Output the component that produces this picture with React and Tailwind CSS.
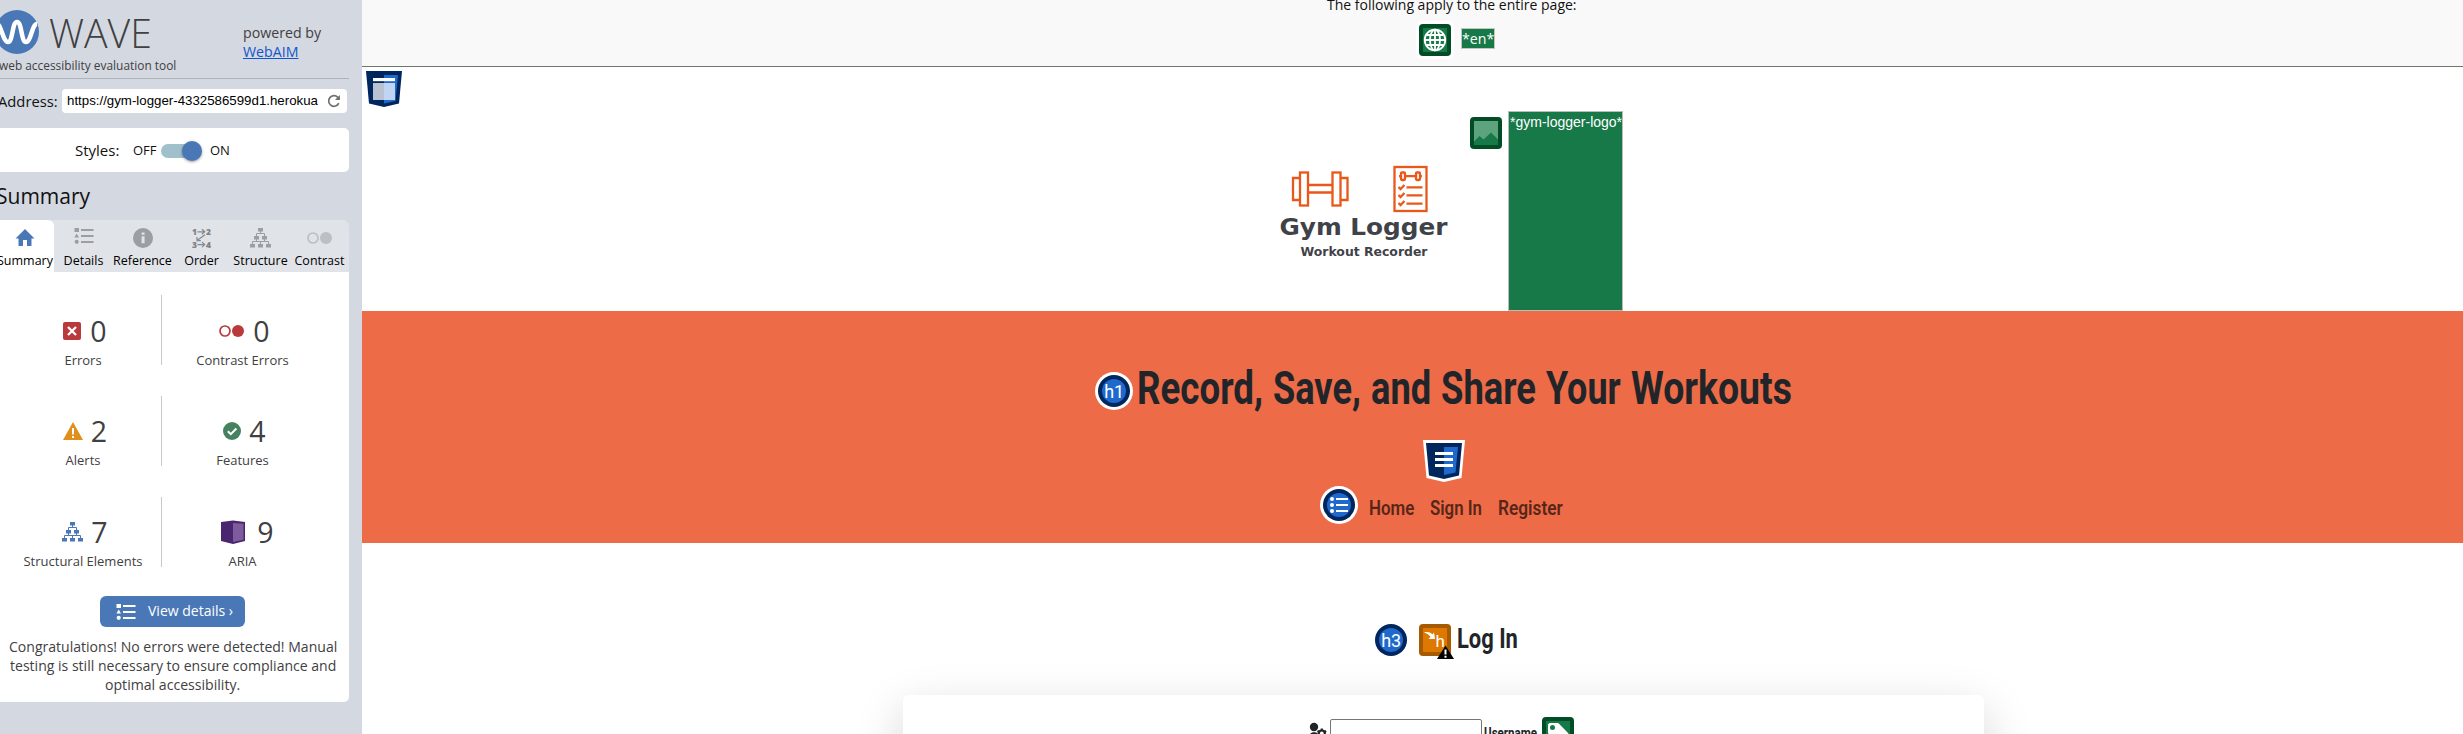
import { useLayoutEffect, useRef, useState } from "react";

// Condensed display text: squeezes a regular face horizontally to a given width.
function Condensed({ width, children, className = "" }) {
  const ref = useRef(null);
  const [scale, setScale] = useState(1);
  useLayoutEffect(() => {
    setScale(width / ref.current.offsetWidth);
  }, [width]);
  return (
    <span className={`block shrink-0 ${className}`} style={{ width }}>
      <span
        ref={ref}
        className="inline-block origin-left whitespace-nowrap"
        style={{ transform: `scaleX(${scale})` }}
      >
        {children}
      </span>
    </span>
  );
}

function ListIcon({ className }) {
  return (
    <svg width="20" height="18" viewBox="0 0 20 18" fill="currentColor" className={className}>
      <rect x="0.5" y="1" width="4.5" height="4" />
      <path d="M2.7 6.6 5 10.6H.4z" />
      <circle cx="2.7" cy="14.8" r="2.1" />
      <rect x="7" y="2" width="12.5" height="2" />
      <rect x="7" y="8" width="12.5" height="2" />
      <rect x="7" y="14" width="12.5" height="2" />
    </svg>
  );
}

function TreeIcon({ className }) {
  return (
    <svg width="21" height="20" viewBox="0 0 21 20" fill="currentColor" className={className}>
      <path d="M8 0h5v3.500H8zM4 8h5v3.500H4zM12 8h5v3.500h-5zM0 16h5v3.500H0zM8 16h5v3.500H8zM16 16h5v3.500h-5z" />
      <path d="M10.500 3v2.500M6.500 9V5.500h8V9M6.500 11v2.500M14.500 11v2.500M2.500 17v-3.500h16V17M10.500 13.500V17" fill="none" stroke="currentColor" strokeWidth="1" />
    </svg>
  );
}

function HomeIcon() {
  return (
    <svg width="20" height="18" viewBox="0 0 20 18" fill="#4a78b6">
      <path d="M10 0 19.500 9.500H16.500V17H12V11H8V17H3.500V9.500H.5z" />
    </svg>
  );
}

function InfoIcon() {
  return (
    <svg width="20" height="20" viewBox="0 0 20 20">
      <circle cx="10" cy="10" r="10" fill="#9b9ea2" />
      <path d="M8.600 4.500h3v2.300h-3zM8.600 8.300h3v6.900h-3z" fill="#e0e3e8" />
    </svg>
  );
}

function OrderIcon() {
  return (
    <svg width="20" height="20" viewBox="0 0 20 20" fill="#7f8286">
      <g fontFamily="Open Sans, sans-serif" fontWeight="800" fontSize="8.500">
        <text x="0" y="6.500">1</text>
        <text x="14" y="6.500">2</text>
        <text x="0" y="19.500">3</text>
        <text x="14" y="19.500">4</text>
      </g>
      <path d="M5.500 3.800h7M10 1.300l2.700 2.500L10 6.300M5.500 16.600h7M10 14.100l2.700 2.500-2.700 2.500M13 6.800 5 12.500M5 9v3.600h3.800" fill="none" stroke="#85888c" strokeWidth="1.200" />
    </svg>
  );
}

function ContrastIcon({ className }) {
  return (
    <svg width="25" height="12" viewBox="0 0 25 12" className={className}>
      <circle cx="6" cy="6" r="5" fill="none" stroke="currentColor" strokeWidth="1.700" />
      <circle cx="19" cy="6" r="6" fill="currentColor" />
    </svg>
  );
}

function ErrorIcon() {
  return (
    <svg width="18" height="18" viewBox="0 0 18 18">
      <rect width="18" height="18" rx="2" fill="#b93a3c" />
      <path d="m5 5 8 8M13 5l-8 8" stroke="#fff" strokeWidth="2.300" />
    </svg>
  );
}

function AlertIcon() {
  return (
    <svg width="20" height="18" viewBox="0 0 20 18">
      <path d="M10 0 20 18H0z" fill="#e08f1b" />
      <path d="M9 6h2v6.500H9zM9 14h2v2H9z" fill="#fff" />
    </svg>
  );
}

function FeatureIcon() {
  return (
    <svg width="18" height="18" viewBox="0 0 18 18">
      <circle cx="9" cy="9" r="9" fill="#46825f" />
      <path d="m4.800 9.200 3 3 5.600-5.700" fill="none" stroke="#fff" strokeWidth="2" />
    </svg>
  );
}

function AriaIcon() {
  return (
    <svg width="24" height="24" viewBox="0 0 24 24">
      <path d="M0 2 12 .5 24 2v19L12 24 0 21z" fill="#4a2570" />
      <path d="M12 3 22.500 3.800V19.700L12 22z" fill="#7f5c9e" />
    </svg>
  );
}

const tabs = [
  { label: "Summary", icon: <HomeIcon />, active: true, box: "w-[58px] pr-0" },
  { label: "Details", icon: <ListIcon className="-mt-1 text-[#9b9ea2]" />, box: "w-[59px]" },
  { label: "Reference", icon: <InfoIcon />, box: "w-[59px]" },
  { label: "Order", icon: <OrderIcon />, box: "w-[59px]" },
  { label: "Structure", icon: <TreeIcon className="text-[#9b9ea2]" />, box: "w-[59px]" },
  { label: "Contrast", icon: <ContrastIcon className="text-[#bcbfc4]" />, box: "w-[59px]" },
];

function Stat({ icon, value, label, row, gap }) {
  return (
    <div className="flex flex-col items-center">
      <div className={`flex h-10 items-center ${row}`}>
        <div className="flex h-6 items-center">{icon}</div>
        <span className={`text-[28.500px] leading-10 ${gap}`}>{value}</span>
      </div>
      <div className="mt-[-1px] text-[13px] leading-5 whitespace-nowrap">{label}</div>
    </div>
  );
}

function StatRow({ left, right, pad }) {
  return (
    <div className="flex h-[101px] items-start">
      <div className={`w-[165px] pl-[9px] ${pad}`}>{left}</div>
      <div className="h-[70px] w-px bg-[#c8c8c8]" />
      <div className={`w-[161px] ${pad}`}>{right}</div>
    </div>
  );
}

function Sidebar() {
  return (
    <aside className="h-[734px] w-[362px] shrink-0 overflow-hidden bg-[#d4d8e0] text-[#3f4042]">
      <div className="-ml-1 w-[353px]">
        <header className="flex h-[79px] justify-between border-b border-[#b0b4b8]">
          <div className="flex flex-col pt-[10px]">
            <div className="flex h-[46px]">
              <svg width="44" height="44" viewBox="0 0 44 44" className="-ml-px">
                <circle cx="22" cy="22" r="22" fill="#4a78b6" />
                <path d="M2 14C6 14 8 32 13 32S17 12 22 12s4 20 9 20S37 14 42 14" fill="none" stroke="#fff" strokeWidth="4.500" />
              </svg>
              <span className="ml-[10px] text-[40px] font-light leading-[46px]">
                <Condensed width={103}>WAVE</Condensed>
              </span>
            </div>
            <div className="ml-[3px] text-[12.500px] leading-5 whitespace-nowrap">
              <Condensed width={177}>web accessibility evaluation tool</Condensed>
            </div>
          </div>
          <div className="mr-[28px] pt-[23px] text-[14.200px] leading-[19px]">
            <Condensed width={78}>powered by</Condensed>
            <div className="text-[#1155cc] underline">WebAIM</div>
          </div>
        </header>

        <div className="mt-[10px] flex h-6 items-center pr-0.5">
          <span className="w-[66px] pl-[2px] text-[15px] leading-6 text-[#111]">
            <Condensed width={60}>Address:</Condensed>
          </span>
          <div className="flex h-6 flex-1 items-center justify-between rounded-[4px] bg-white pr-[6px] pl-[5px]">
            <span className="font-['Liberation_Sans',sans-serif] text-[13.333px] leading-6 text-black">
              <Condensed width={251}>https://gym-logger-4332586599d1.herokua</Condensed>
            </span>
            <svg width="14" height="14" viewBox="0 0 14 14" fill="none" stroke="#6f6f6f" strokeWidth="1.700">
              <path d="M11.800 9.200A5.300 5.300 0 1 1 10.800 3.300L12.500 5" />
              <path d="M12.900 1v5H8z" fill="#6f6f6f" stroke="none" />
            </svg>
          </div>
        </div>

        <div className="mt-[15px] flex h-11 items-center rounded-[5px] bg-white pl-[79px] text-[#111]">
          <span className="w-[58px] text-[15px] leading-5">Styles:</span>
          <span className="w-[28px] text-[13px] leading-5">OFF</span>
          <div className="mt-0.5 flex h-[14px] w-10 items-center justify-end rounded-full bg-[#a0c1cc]">
            <div className="-mr-px size-5 shrink-0 rounded-full bg-[#4a78b6] shadow-[0_1px_3px_rgba(0,0,0,0.4)]" />
          </div>
          <span className="ml-[9px] text-[13px] leading-5">ON</span>
        </div>

        <h2 className="mt-[10px] text-[21px] leading-7 text-[#111]">Summary</h2>

        <nav className="mt-[10px] flex h-[52px] overflow-hidden rounded-t-[6px] bg-[#e0e3e8] text-black">
          {tabs.map((t) => (
            <div
              key={t.label}
              className={`flex shrink-0 flex-col items-center pt-[7px] ${t.box} ${t.active ? "rounded-tr-[6px] bg-white" : ""}`}
            >
              <div className="flex h-[22px] items-center">{t.icon}</div>
              <div className="mt-[2px] text-[12.500px] leading-5 whitespace-nowrap">{t.label}</div>
            </div>
          ))}
        </nav>

        <section className="h-[430px] rounded-b-[5px] bg-white pt-[23px]">
          <StatRow
            pad="pt-[16px]"
            left={<Stat icon={<ErrorIcon />} value="0" label="Errors" row="pl-[4px]" gap="ml-[9px]" />}
            right={<Stat icon={<ContrastIcon className="text-[#b93a3c]" />} value="0" label="Contrast Errors" row="pl-[4px]" gap="ml-[9px]" />}
          />
          <StatRow
            pad="pt-[15px]"
            left={<Stat icon={<AlertIcon />} value="2" label="Alerts" row="pl-[4px]" gap="ml-[8px]" />}
            right={<Stat icon={<FeatureIcon />} value="4" label="Features" row="pl-[4px]" gap="ml-[8px]" />}
          />
          <StatRow
            pad="pt-[15px]"
            left={<Stat icon={<TreeIcon className="text-[#4a78b6]" />} value="7" label="Structural Elements" row="pl-[4px]" gap="ml-[8px]" />}
            right={<Stat icon={<AriaIcon />} value="9" label="ARIA" row="pl-[10px]" gap="ml-[12px]" />}
          />
          <button className="mx-auto mt-[-2px] flex h-[31px] w-[145px] items-center rounded-[6px] bg-[#4a78b6] pl-[16px] text-white">
            <ListIcon />
            <span className="-mt-px ml-[12px] text-[14px] leading-5 whitespace-nowrap">View details ›</span>
          </button>
          <p className="mt-[10px] flex flex-col items-center text-[14px] leading-[19px]">
            <Condensed width={328}>Congratulations! No errors were detected! Manual</Condensed>
            <Condensed width={326}>testing is still necessary to ensure compliance and</Condensed>
            <Condensed width={135}>optimal accessibility.</Condensed>
          </p>
        </section>
      </div>
    </aside>
  );
}

function RoundBadge({ children, ring }) {
  return (
    <svg width="38" height="38" viewBox="0 0 38 38" className="shrink-0">
      {ring && <circle cx="19" cy="19" r="19" fill="#fff" />}
      <circle cx="19" cy="19" r="16" fill="#00265e" />
      <circle cx="19" cy="19" r="12" fill="#1f69cc" />
      {children}
    </svg>
  );
}

function HeadingLabel({ children }) {
  return (
    <text x="19.200" y="25.500" textAnchor="middle" fill="#fff" fontFamily="Roboto, sans-serif" fontSize="18">
      {children}
    </text>
  );
}

function GymLogo() {
  return (
    <svg width="180" height="100" viewBox="1275 160 180 100">
      <g fill="none" stroke="#e8581a" strokeWidth="2.300">
        <rect x="1300" y="172.500" width="8" height="33" />
        <rect x="1332.500" y="172.500" width="8" height="33" />
        <path d="M1300 178h-7v22h7M1340.500 178h7v22h-7M1308 185h24.500M1308 192.500h24.500" />
        <rect x="1394.500" y="167" width="32" height="44" />
        <rect x="1401" y="172.500" width="4" height="7.500" rx="1" />
        <rect x="1416" y="172.500" width="4" height="7.500" rx="1" />
        <path d="M1399 176.200h2M1405 176.200h11M1420 176.200h2M1406.500 187.300h16M1406.500 195.400h16M1406.500 203.600h16M1398.500 187l2 2 4-4M1398.500 195l2 2 4-4M1398.500 203l2 2 4-4" />
      </g>
      <g fill="#3f4248" fontFamily="DejaVu Sans, sans-serif" fontWeight="700">
        <text x="1279.500" y="235" fontSize="23" textLength="168" lengthAdjust="spacingAndGlyphs">Gym Logger</text>
        <text x="1300.500" y="256.300" fontSize="11.500" textLength="127" lengthAdjust="spacingAndGlyphs">Workout Recorder</text>
      </g>
    </svg>
  );
}

function PageBar() {
  return (
    <div className="h-[67px] border-b border-[#6f766b] bg-[#f9f9f9]">
      <div className="flex w-[2180px] flex-col items-center">
        <div className="-mt-[5px] text-[14px] leading-5 text-[#111]">
          <Condensed width={250}>The following apply to the entire page:</Condensed>
        </div>
        <div className="mt-[6px] mr-[-7px] flex h-[38px] items-start">
          <svg width="38" height="38" viewBox="0 0 38 38">
            <rect width="38" height="38" rx="6" fill="#fff" />
            <rect x="3" y="3" width="32" height="32" rx="4" fill="#024d25" />
            <rect x="7" y="7" width="24" height="24" fill="#177848" />
            <g fill="none" stroke="#fff" strokeWidth="1.800">
              <circle cx="19" cy="19" r="10.300" />
              <ellipse cx="19" cy="19" rx="5" ry="10.300" />
              <path d="M19 9v20M9 19h20M10.500 14h17M10.500 24h17" />
            </g>
          </svg>
          <span className="mt-[7px] ml-[7px] h-[21px] w-[34px] border border-[#c5c5c5] bg-[#177848] text-center text-[14.200px] leading-[19px] text-white">
            *en*
          </span>
        </div>
      </div>
    </div>
  );
}

function LogoArea() {
  return (
    <div className="flex h-[244px] items-start">
      <svg width="36" height="36" viewBox="0 0 36 36" className="mt-1 ml-1 shrink-0">
        <path d="M0 0H36L33 32.500 18 36 3 32.500z" fill="#00265e" />
        <path d="M18 4H32L29.500 30 18 32.500z" fill="#1f69cc" />
        <path d="M7 7H29v3.200H7z" fill="#fff" />
        <path d="M7 12H29V29H7z" fill="#fff" fillOpacity=".72" />
      </svg>
      <div className="mt-[93px] ml-[873px]">
        <GymLogo />
      </div>
      <svg width="32" height="32" viewBox="0 0 32 32" className="mt-[50px] ml-[15px] shrink-0">
        <rect width="32" height="32" rx="4" fill="#024d25" />
        <rect x="4" y="4" width="24" height="24" fill="#5da37e" />
        <path d="M4 24.500 9.500 19l4 3.500L21 15.500l7 7V28H4z" fill="#177848" />
      </svg>
      <div className="mt-[44px] ml-[6px] h-[200px] w-[115px] shrink-0 border border-[#bbb] bg-[#177848] pl-px font-['Liberation_Sans',sans-serif] text-[14px] leading-[20px] text-white">
        <Condensed width={112}>*gym-logger-logo*</Condensed>
      </div>
    </div>
  );
}

function Hero() {
  return (
    <div className="h-[232px] bg-[#ed6b47] font-[Roboto,sans-serif]">
      <div className="flex h-[129px] w-[2163px] items-start justify-center">
        <div className="mt-[61px]">
          <RoundBadge ring><HeadingLabel>h1</HeadingLabel></RoundBadge>
        </div>
        <h1 className="ml-1 flex gap-[10px] pt-[52px] text-[46px] font-bold leading-[50px] text-[#212529]">
          <Condensed width={126}>Record,</Condensed>
          <Condensed width={88}>Save,</Condensed>
          <Condensed width={60}>and</Condensed>
          <Condensed width={95}>Share</Condensed>
          <Condensed width={75}>Your</Condensed>
          <Condensed width={161}>Workouts</Condensed>
        </h1>
      </div>
      <div className="flex w-[2163px] justify-center">
        <svg width="42" height="42" viewBox="0 0 42 42">
          <path d="M0 0H42L38.500 38 21 42 3.500 38z" fill="#fff" />
          <path d="M3 3H39L36 35.500 21 39 6 35.500z" fill="#00265e" />
          <path d="M21 7H35L32.500 32.500 21 35z" fill="#1f69cc" />
          <path d="M12 12H30v3H12zM12 18H30v3H12zM12 24H30v3H12z" fill="#fff" />
        </svg>
      </div>
      <div className="mt-1 flex pl-[958px]">
        <RoundBadge ring>
          <g fill="#fff">
            <circle cx="12" cy="13" r="2" />
            <circle cx="12" cy="19" r="2" />
            <circle cx="12" cy="25" r="2" />
            <path d="M16 12h12v2H16zM16 18h12v2H16zM16 24h12v2H16z" />
          </g>
        </RoundBadge>
        <nav className="ml-[11px] flex gap-[16px] pt-[10px] text-[21px] font-semibold leading-[24px] text-[#582618]">
          <Condensed width={45}>Home</Condensed>
          <Condensed width={52}>Sign In</Condensed>
          <Condensed width={65}>Register</Condensed>
        </nav>
      </div>
    </div>
  );
}

function Login() {
  return (
    <div className="font-[Roboto,sans-serif] text-[#212529]">
      <div className="flex h-[152px] items-start pt-[78px] pl-[1010px]">
        <RoundBadge><HeadingLabel>h3</HeadingLabel></RoundBadge>
        <svg width="38" height="38" viewBox="0 0 38 38" className="ml-[9px] shrink-0">
          <rect y="3" width="32" height="32" rx="4" fill="#a65b00" />
          <rect x="4" y="7" width="24" height="24" fill="#dd7900" />
          <path d="M5 11.500C8 10.500 11 11 13.500 13.500L15 11.500 16 18 9.500 18 11.500 16C10 13.500 8 12.500 5 11.500z" fill="#fff" />
          <text x="16.500" y="26" fill="#fff" fontFamily="Roboto, sans-serif" fontSize="17">h</text>
          <path d="M26.500 24.500 35 38H18z" fill="#000" />
          <path d="M25.500 28.500h2v5h-2zM25.500 34.700h2v2h-2z" fill="#fff" />
        </svg>
        <h3 className="pt-[3px] text-[28px] font-bold leading-[30px]">
          <Condensed width={61}>Log In</Condensed>
        </h3>
      </div>
      <div className="ml-[541px] h-[300px] w-[1081px] rounded-[6px] bg-white shadow-[0_16px_48px_rgba(0,0,0,0.175)]">
        <div className="flex items-start pt-[22px] pl-[406px]">
          <svg width="18" height="16" viewBox="0 0 18 16" className="mt-[5px]" fill="#212529">
            <circle cx="5" cy="5" r="4.200" />
            <path d="M0 16c0-4 2-5.800 5-5.800 1.500 0 2.500.3 3.500 1V16z" />
            <circle cx="12.800" cy="11.500" r="3" fill="none" stroke="#212529" strokeWidth="2.200" />
            <path d="M12.800 6.500v2M8.500 9l1.700 1M17.100 9l-1.700 1" stroke="#212529" strokeWidth="2.200" />
          </svg>
          <div className="mt-[2px] ml-[3px] h-[30px] w-[152px] rounded-[2px] border border-[#767676] bg-white" />
          <span className="mt-[7px] ml-[2px] text-[14px] font-bold leading-[18px]">
            <Condensed width={53}>Username</Condensed>
          </span>
          <svg width="32" height="32" viewBox="0 0 32 32" className="ml-[5px] shrink-0">
            <rect width="32" height="32" rx="4" fill="#024d25" />
            <rect x="4" y="4" width="24" height="24" fill="#177848" />
            <path fillRule="evenodd" d="M8 6H15C16 6 16.600 6.200 17.300 6.900L26.500 16.500 17 26.500 6.800 17.200C6.200 16.600 6 16 6 15V8C6 7 7 6 8 6zM10.500 8a2.500 2.500 0 1 0 0 5 2.500 2.500 0 0 0 0-5z" fill="#fff" />
          </svg>
        </div>
      </div>
    </div>
  );
}

export default function App() {
  return (
    <div className="flex h-[734px] w-[2463px] overflow-hidden bg-white font-['Open_Sans',sans-serif]">
      <Sidebar />
      <main className="h-[734px] min-w-0 flex-1 overflow-hidden bg-white">
        <PageBar />
        <LogoArea />
        <Hero />
        <Login />
      </main>
    </div>
  );
}
